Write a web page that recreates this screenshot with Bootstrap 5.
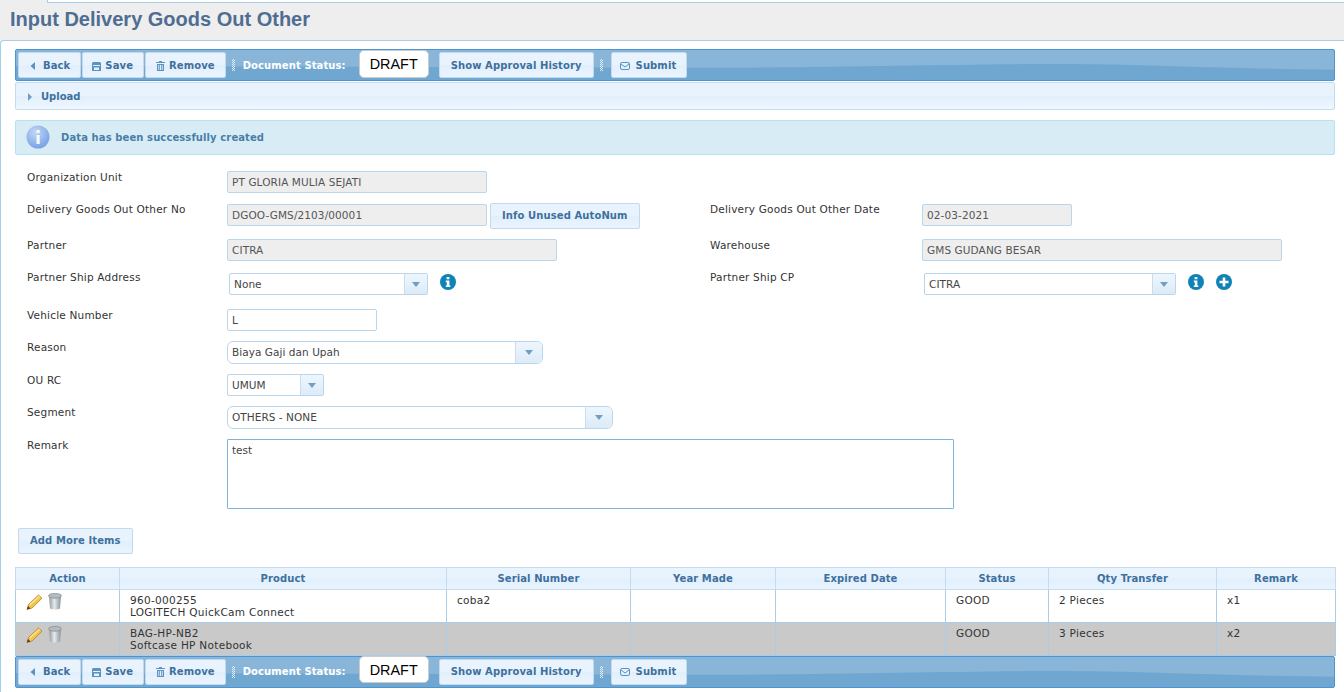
<!DOCTYPE html>
<html lang="en">
<head>
<meta charset="utf-8">
<title>Input Delivery Goods Out Other</title>
<link rel="stylesheet" href="https://cdn.jsdelivr.net/npm/bootstrap@5.3.0/dist/css/bootstrap.min.css">
<style>
html,body{height:692px;overflow:hidden}
body{background:#eee;font-family:"DejaVu Sans",Verdana,sans-serif;font-size:10.5px;color:#333;line-height:12px}
.top-strip{height:3px;margin-left:47px;background:#fff;border:1px solid #a5cfe9;border-top:0;border-right:0}
.page-title{height:37px;margin:0;padding:5px 0 0 10px;font:bold 20px/22px "Liberation Sans",Arial,sans-serif;color:#4f6d92}
.main-panel{height:660px;background:#fff;border:1px solid #a5cfe9;border-right:0;border-bottom:0;border-radius:4px 0 0 0;padding:8px 9px 0 14px}
.tool-bar{position:relative;height:32px;background:#88b5d8;border:1px solid #4a96d4;border-radius:2px;padding:2px;gap:1px}
.tool-wave{position:absolute;left:0;top:0;width:100%;height:100%}
.tool-bar>*:not(.tool-wave){position:relative}
.flat-btn{display:inline-flex;align-items:center;justify-content:center;height:26px;padding:0 11px;border:1px solid #c3d9ec;border-radius:2px;background:linear-gradient(#e9f3fd 0,#e9f3fd 48%,#e1effc 50%,#eaf4fe 100%);font:bold 10px/12px "DejaVu Sans",Verdana,sans-serif;letter-spacing:.1px;color:#3e709e;white-space:nowrap}
.flat-btn:hover{color:#3e709e;background:#e9f3fd;border-color:#c3d9ec}
.btn-ic{padding-left:10px;padding-right:10px}
.ic-back{margin-right:6px}
.ic-save{margin:0 4px 0 -1px}
.ic-trash{margin-right:4px}
.ic-mail{margin:0 6px 0 -2px}
.tool-top .flat-btn{padding-top:2px}
.tool-top .status-label{padding-top:2px}
.tool-bot .status-box{align-self:flex-start;margin-top:-3px;height:27px}
.grip{width:3px;height:12px;margin:0 7px 0 5px;background:repeating-conic-gradient(#e3eef8 0 25%,transparent 0 50%) 0 0/2px 2px}
.status-label{font-size:10px;color:#fff;font-weight:bold;letter-spacing:.1px;margin-right:12px}
.status-box{display:inline-flex;align-items:center;justify-content:center;width:70px;height:28px;margin-top:-2px;margin-right:9px;background:#fff;border:1px solid #ccc;border-radius:5px;font:14.4px/18px "Liberation Sans",Arial,sans-serif;color:#000}
.upload-bar{height:28px;margin-top:1px;padding:2px 0 0 11px;gap:8px;border:1px solid #c4dcee;border-radius:2px;background:linear-gradient(#e9f3fd 0,#e9f3fd 48%,#e1effc 50%,#eff6fe 100%);font-size:10px;font-weight:bold;color:#3e709e}
.msg-bar{height:35px;margin-top:10px;padding-left:10px;gap:11px;background:#d8ecf6;border:1px solid #b4e3f1;border-radius:2px;font-size:10px;font-weight:bold;letter-spacing:.1px;color:#4a7ea6}
.form-area{padding:16px 0 0 12px}
.frm-row{display:flex}
.lab-col{width:200px;flex:none;color:#333;letter-spacing:.2px}
.lift1{margin-top:-1px}
.lift2{margin-top:-2px}
.left-half{display:flex;width:683px;flex:none}
.right-lab{width:212px;flex:none}
.h32{height:32px}.h33{height:33px}.h35{height:35px}.h36{height:36px}.h34{height:34px}
.fld.form-control{height:22px;padding:0 4px;border:1px solid #b9d6ec;border-radius:2px;font:10.5px/20px "DejaVu Sans",Verdana,sans-serif;letter-spacing:.1px;color:#444;box-shadow:none}
.fld.form-control:disabled,.fld.form-control[readonly]{background:#eee;color:#555}
.w-260{width:260px}.w-330{width:330px}.w-150{width:150px}.w-360{width:360px}
.combo{display:flex;height:22px;border:1px solid #b9d6ec;border-radius:2px;background:#fff;color:#444;line-height:20px;padding-left:4px;letter-spacing:.05px}
.combo>.txt{flex:1}
.combo>.arr{width:23px;border-left:1px solid #c9dded;background:linear-gradient(#eef6fd,#dcebf8);display:flex;align-items:center;justify-content:center}
.combo.rnd{border-radius:6px;height:23px}
.combo.rnd>.arr{width:27px;border-radius:0 6px 6px 0}
.mg2{margin-left:2px}
.info-btn{margin:-1px 0 0 3px}
.w-199{width:199px}.w-252{width:252px}.w-316{width:316px}.w-97{width:97px}.w-386{width:386px}
.fld-note{width:727px;height:70px;padding:3px 4px;border:1px solid #7db3dc;border-radius:1px;font:10.5px/14px "DejaVu Sans",Verdana,sans-serif;color:#444;resize:none;display:block}
.ic-gap{margin:1px 0 0 12px}
.add-btn{margin:19px 0 0 3px}
.data-tab{width:1320px;margin:13px 0 0;table-layout:fixed;border-collapse:collapse;color:#333;letter-spacing:.3px}
.data-tab th,.data-tab td{border:1px solid #a9cde8;padding:0;vertical-align:top}
.data-tab th{height:22px;border-color:#c4dcee;background:linear-gradient(#e9f3fd 0,#e9f3fd 48%,#e1effc 50%,#eaf4fe 100%);text-align:center;font-size:10px;font-weight:bold;letter-spacing:.1px;color:#3e709e;vertical-align:middle}
.data-tab td{height:33px;padding:4px 10px;background:#fff}
.data-tab tr.gray-row td{background:#c9c9c9}
.data-tab td.act-cell{padding:3px 0 0 10px}
.trash-ic{margin-left:1px}
</style>
</head>
<body>
<div class="top-strip"></div>
<h1 class="page-title">Input Delivery Goods Out Other</h1>
<div class="main-panel">

<div class="tool-bar tool-top d-flex align-items-center">
<svg class="tool-wave" viewBox="0 0 1320 32" preserveAspectRatio="none"><path d="M0 17L670 19C800 19 950 15 1040 15C1130 15 1200 20 1320 21V32H0Z" fill="#6fa7d1"/></svg>
<a class="btn flat-btn btn-ic" href="#"><svg class="ic-back" width="8" height="8" viewBox="0 0 8 8"><path d="M6 0V8L1.500 4Z" fill="#5d93c0"/></svg>Back</a>
<a class="btn flat-btn btn-ic" href="#"><svg class="ic-save" width="9" height="9" viewBox="0 0 9 9"><path d="M1 0H8L9 1V9H0V1ZM1 3V4H8V3ZM2 5.500V8H7V5.500Z" fill="#5d93c0" fill-rule="evenodd"/></svg>Save</a>
<a class="btn flat-btn btn-ic" href="#"><svg class="ic-trash" width="9" height="10" viewBox="0 0 9 10"><path d="M3 0H6V1H9V2H0V1H3ZM1 3H8V10H1ZM2.300 4V9H3.200V4ZM4 4V9H5V4ZM5.800 4V9H6.700V4Z" fill="#5d93c0" fill-rule="evenodd"/></svg>Remove</a>
<span class="grip"></span>
<span class="status-label">Document Status:</span>
<span class="status-box">DRAFT</span>
<a class="btn flat-btn" href="#">Show Approval History</a>
<span class="grip"></span>
<a class="btn flat-btn btn-ic" href="#"><svg class="ic-mail" width="10" height="8" viewBox="0 0 10 8"><rect x=".5" y=".5" width="9" height="7" rx="1.500" fill="none" stroke="#5d93c0"/><path d="M1 2L5 5L9 2" fill="none" stroke="#5d93c0"/></svg>Submit</a>
</div>

<div class="upload-bar d-flex align-items-center"><svg width="6" height="8" viewBox="0 0 6 8"><path d="M1 0L5 4L1 8Z" fill="#6f9fc6"/></svg>Upload</div>

<div class="msg-bar d-flex align-items-center">
<svg width="24" height="25" viewBox="0 0 24 25"><defs><radialGradient id="gb" cx=".4" cy=".3" r=".8"><stop offset="0" stop-color="#c3d8f6"/><stop offset="1" stop-color="#6d9be4"/></radialGradient></defs><circle cx="12" cy="12" r="11.500" fill="url(#gb)"/><rect x="10.500" y="5" width="3.200" height="3" fill="#f4f8fe"/><rect x="10.500" y="10" width="3.200" height="9" fill="#f4f8fe"/></svg>
<span>Data has been successfully created</span>
</div>

<form class="form-area">
<div class="frm-row h33"><div class="lab-col">Organization Unit</div><input class="form-control fld w-260" value="PT GLORIA MULIA SEJATI" disabled></div>

<div class="frm-row h35">
<div class="left-half"><div class="lab-col lift1">Delivery Goods Out Other No</div><input class="form-control fld w-260" value="DGOO-GMS/2103/00001" disabled><a class="btn flat-btn info-btn" href="#">Info Unused AutoNum</a></div>
<div class="lab-col right-lab lift1">Delivery Goods Out Other Date</div><input class="form-control fld w-150" value="02-03-2021" disabled>
</div>

<div class="frm-row h34">
<div class="left-half"><div class="lab-col">Partner</div><input class="form-control fld w-330" value="CITRA" disabled></div>
<div class="lab-col right-lab">Warehouse</div><input class="form-control fld w-360" value="GMS GUDANG BESAR" disabled>
</div>

<div class="frm-row h36">
<div class="left-half"><div class="lab-col lift2">Partner Ship Address</div><div class="combo w-199 mg2"><span class="txt">None</span><span class="arr"><svg width="8" height="5" viewBox="0 0 8 5"><path d="M0 0H8L4 5Z" fill="#6f9fc6"/></svg></span></div>
<svg class="ic-gap" width="16" height="16" viewBox="0 0 16 16"><circle cx="8" cy="8" r="8" fill="#0f83b5"/><path d="M6.600 3H9.400V5.200H6.600ZM5.800 6.600H9.400V11.400H10.400V13H5.800V11.400H6.800V8.200H5.800Z" fill="#fff"/></svg></div>
<div class="lab-col right-lab lift2">Partner Ship CP</div><div class="combo w-252 mg2"><span class="txt">CITRA</span><span class="arr"><svg width="8" height="5" viewBox="0 0 8 5"><path d="M0 0H8L4 5Z" fill="#6f9fc6"/></svg></span></div>
<svg class="ic-gap" width="16" height="16" viewBox="0 0 16 16"><circle cx="8" cy="8" r="8" fill="#0f83b5"/><path d="M6.600 3H9.400V5.200H6.600ZM5.800 6.600H9.400V11.400H10.400V13H5.800V11.400H6.800V8.200H5.800Z" fill="#fff"/></svg>
<svg class="ic-gap" width="16" height="16" viewBox="0 0 16 16"><circle cx="8" cy="8" r="8" fill="#0f83b5"/><path d="M6.700 3.500H9.300V6.700H12.500V9.300H9.300V12.500H6.700V9.300H3.500V6.700H6.700Z" fill="#fff"/></svg>
</div>

<div class="frm-row h32"><div class="lab-col">Vehicle Number</div><input class="form-control fld w-150" value="L"></div>
<div class="frm-row h33"><div class="lab-col">Reason</div><div class="combo rnd w-316"><span class="txt">Biaya Gaji dan Upah</span><span class="arr"><svg width="8" height="5" viewBox="0 0 8 5"><path d="M0 0H8L4 5Z" fill="#6f9fc6"/></svg></span></div></div>
<div class="frm-row h32"><div class="lab-col">OU RC</div><div class="combo w-97"><span class="txt">UMUM</span><span class="arr"><svg width="8" height="5" viewBox="0 0 8 5"><path d="M0 0H8L4 5Z" fill="#6f9fc6"/></svg></span></div></div>
<div class="frm-row h33"><div class="lab-col">Segment</div><div class="combo rnd w-386"><span class="txt">OTHERS - NONE</span><span class="arr"><svg width="8" height="5" viewBox="0 0 8 5"><path d="M0 0H8L4 5Z" fill="#6f9fc6"/></svg></span></div></div>
<div class="frm-row"><div class="lab-col">Remark</div><textarea class="fld-note">test</textarea></div>
</form>

<a class="btn flat-btn add-btn" href="#">Add More Items</a>

<table class="data-tab">
<colgroup><col style="width:104px"><col style="width:327px"><col style="width:184px"><col style="width:145px"><col style="width:170px"><col style="width:103px"><col style="width:168px"><col style="width:119px"></colgroup>
<thead><tr><th>Action</th><th>Product</th><th>Serial Number</th><th>Year Made</th><th>Expired Date</th><th>Status</th><th>Qty Transfer</th><th>Remark</th></tr></thead>
<tbody>
<tr><td class="act-cell"><svg width="17" height="16" viewBox="0 0 17 16"><path d="M12.500 1L16 4.200L6 14L1 15.500L2.500 10.500Z" fill="#f4c650" stroke="#b5801e" stroke-width=".8"/><path d="M4 10.500L13.500 2.200" stroke="#fbe59a" stroke-width="1.200"/><path d="M1 15.500L2 12L4.500 14.500Z" fill="#5a3a1a"/></svg> <svg class="trash-ic" width="14" height="17" viewBox="0 0 14 17"><defs><linearGradient id="tr" x1="0" x2="1" y1="0" y2="0"><stop offset="0" stop-color="#8f999f"/><stop offset=".45" stop-color="#e6eaec"/><stop offset="1" stop-color="#87929a"/></linearGradient></defs><path d="M1 3L2 15.500C4 16.800 10 16.800 12 15.500L13 3Z" fill="url(#tr)"/><ellipse cx="7" cy="2.800" rx="6.500" ry="2.400" fill="#b4bcc1" stroke="#7f8a90" stroke-width=".7"/></svg></td><td>960-000255<br>LOGITECH QuickCam Connect</td><td>coba2</td><td></td><td></td><td>GOOD</td><td>2 Pieces</td><td>x1</td></tr>
<tr class="gray-row"><td class="act-cell"><svg width="17" height="16" viewBox="0 0 17 16"><path d="M12.500 1L16 4.200L6 14L1 15.500L2.500 10.500Z" fill="#f4c650" stroke="#b5801e" stroke-width=".8"/><path d="M4 10.500L13.500 2.200" stroke="#fbe59a" stroke-width="1.200"/><path d="M1 15.500L2 12L4.500 14.500Z" fill="#5a3a1a"/></svg> <svg class="trash-ic" width="14" height="17" viewBox="0 0 14 17"><path d="M1 3L2 15.500C4 16.800 10 16.800 12 15.500L13 3Z" fill="url(#tr)"/><ellipse cx="7" cy="2.800" rx="6.500" ry="2.400" fill="#b4bcc1" stroke="#7f8a90" stroke-width=".7"/></svg></td><td>BAG-HP-NB2<br>Softcase HP Notebook</td><td></td><td></td><td></td><td>GOOD</td><td>3 Pieces</td><td>x2</td></tr>
</tbody>
</table>

<div class="tool-bar tool-bot d-flex align-items-center">
<svg class="tool-wave" viewBox="0 0 1320 32" preserveAspectRatio="none"><path d="M0 17L670 19C800 19 950 15 1040 15C1130 15 1200 20 1320 21V32H0Z" fill="#6fa7d1"/></svg>
<a class="btn flat-btn btn-ic" href="#"><svg class="ic-back" width="8" height="8" viewBox="0 0 8 8"><path d="M6 0V8L1.500 4Z" fill="#5d93c0"/></svg>Back</a>
<a class="btn flat-btn btn-ic" href="#"><svg class="ic-save" width="9" height="9" viewBox="0 0 9 9"><path d="M1 0H8L9 1V9H0V1ZM1 3V4H8V3ZM2 5.500V8H7V5.500Z" fill="#5d93c0" fill-rule="evenodd"/></svg>Save</a>
<a class="btn flat-btn btn-ic" href="#"><svg class="ic-trash" width="9" height="10" viewBox="0 0 9 10"><path d="M3 0H6V1H9V2H0V1H3ZM1 3H8V10H1ZM2.300 4V9H3.200V4ZM4 4V9H5V4ZM5.800 4V9H6.700V4Z" fill="#5d93c0" fill-rule="evenodd"/></svg>Remove</a>
<span class="grip"></span>
<span class="status-label">Document Status:</span>
<span class="status-box">DRAFT</span>
<a class="btn flat-btn" href="#">Show Approval History</a>
<span class="grip"></span>
<a class="btn flat-btn btn-ic" href="#"><svg class="ic-mail" width="10" height="8" viewBox="0 0 10 8"><rect x=".5" y=".5" width="9" height="7" rx="1.500" fill="none" stroke="#5d93c0"/><path d="M1 2L5 5L9 2" fill="none" stroke="#5d93c0"/></svg>Submit</a>
</div>

</div>
<script src="https://cdn.jsdelivr.net/npm/bootstrap@5.3.0/dist/js/bootstrap.bundle.min.js"></script>
</body>
</html>
